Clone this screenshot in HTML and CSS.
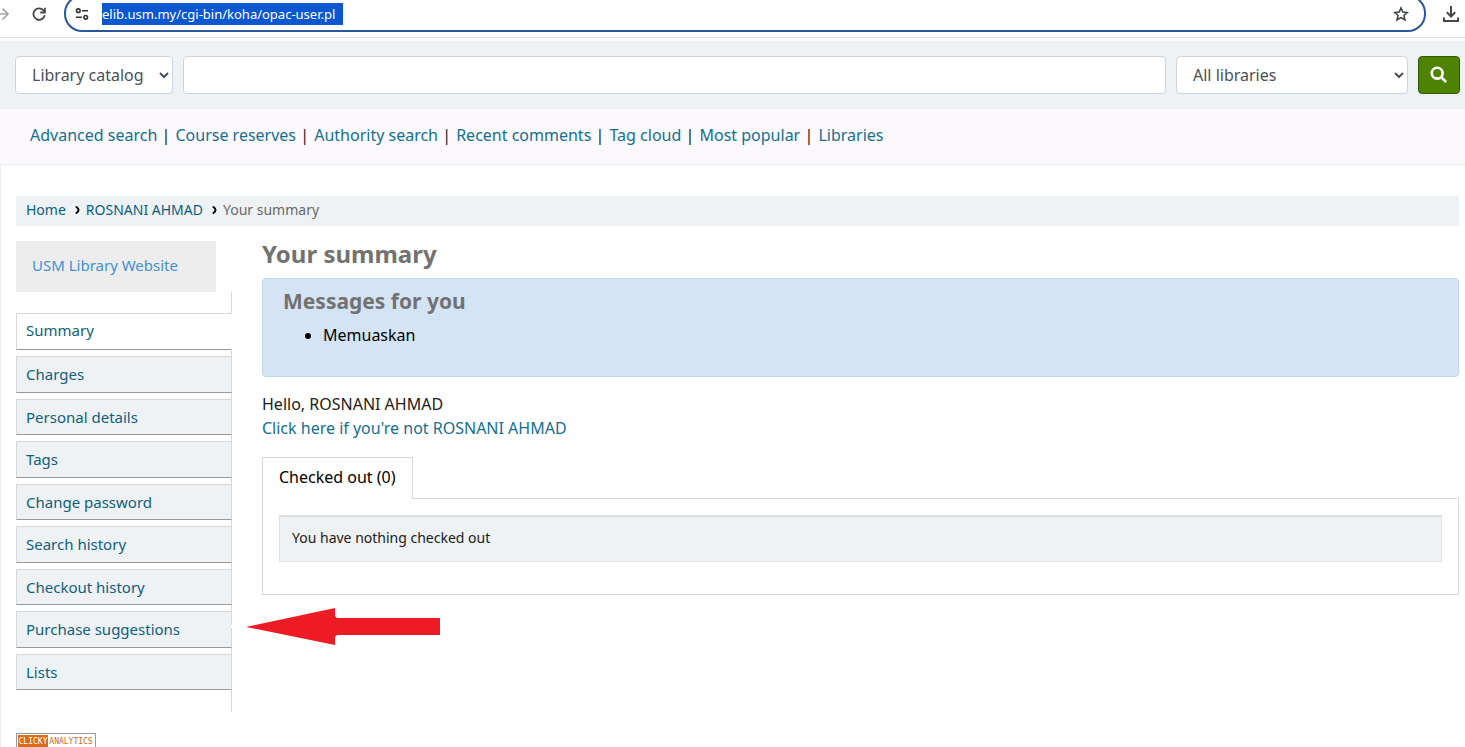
FILE: index.html
```html
<!DOCTYPE html>
<html lang="en">
<head>
<meta charset="utf-8">
<title>Your summary</title>
<link rel="stylesheet" href="styles.css">
</head>
<body>
<div class="browser-bar">
  <button class="tool tool-forward" type="button" aria-label="Forward">
    <svg width="16" height="16" viewBox="0 0 16 16" fill="none" stroke="#a3a3a3" stroke-width="1.7"><path d="M2 8h12M8.500 2.500 14 8l-5.500 5.500"/></svg>
  </button>
  <button class="tool" type="button" aria-label="Reload">
    <svg width="16" height="16" viewBox="0 0 16 16" fill="none" stroke="#474747" stroke-width="1.8"><path d="M13.700 9.200A5.700 5.700 0 1 1 12.300 4.200L13.500 5.600"/><path d="M13.900 1.800v4.700H9.200"/></svg>
  </button>
  <div class="address">
    <svg width="14" height="14" viewBox="0 0 14 14" fill="none" stroke="#333" stroke-width="1.6"><circle cx="3.300" cy="3.700" r="1.800"/><path d="M7 3.700h6M1 10.300h6"/><circle cx="10.700" cy="10.300" r="1.800"/></svg>
    <input class="url" type="text" value="elib.usm.my/cgi-bin/koha/opac-user.pl" aria-label="Address">
    <button class="tool star" type="button" aria-label="Bookmark">
      <svg width="16" height="16" viewBox="0 0 16 16" fill="none" stroke="#3c4043" stroke-width="1.500"><path d="m8 1.900 1.800 4.200 4.600.4-3.500 3 1.100 4.500L8 11.600 4 14l1.100-4.500-3.500-3 4.600-.4z"/></svg>
    </button>
  </div>
  <button class="tool" type="button" aria-label="Downloads">
    <svg width="18" height="18" viewBox="0 0 18 18" fill="none" stroke="#474747" stroke-width="2"><path d="M9 1v10.500M4.800 7.300 9 11.500l4.200-4.200M2 12.500V16h14v-3.500"/></svg>
  </button>
</div>

<form class="search">
  <select class="field field-index" aria-label="Search in"><option>Library catalog</option></select>
  <input class="field field-query" type="text" aria-label="Search terms">
  <select class="field field-branch" aria-label="Library"><option>All libraries</option></select>
  <button class="go" type="submit" aria-label="Search">
    <svg width="18" height="18" viewBox="0 0 18 18" fill="none" stroke="#fff" stroke-width="2.600"><circle cx="7.200" cy="7.200" r="5.400"/><path d="m11.200 11.200 5 5"/></svg>
  </button>
</form>

<nav class="more-searches">
  <a href="#">Advanced search</a> <span>|</span> <a href="#">Course reserves</a> <span>|</span> <a href="#">Authority search</a> <span>|</span> <a href="#">Recent comments</a> <span>|</span> <a href="#">Tag cloud</a> <span>|</span> <a href="#">Most popular</a> <span>|</span> <a href="#">Libraries</a>
</nav>

<div class="page">
  <nav class="breadcrumb" aria-label="Breadcrumb">
    <a href="#">Home</a><svg width="5" height="8" viewBox="0 0 5 8" fill="none" stroke="#000" stroke-width="1.900"><path d="M.8.500C4.500 3 4.500 5 .8 7.500"/></svg><a href="#">ROSNANI AHMAD</a><svg width="5" height="8" viewBox="0 0 5 8" fill="none" stroke="#000" stroke-width="1.900"><path d="M.8.500C4.500 3 4.500 5 .8 7.500"/></svg><span>Your summary</span>
  </nav>
  <div class="columns">
    <aside class="sidebar">
      <a class="website" href="#">USM Library Website</a>
      <ul class="menu">
        <li class="active"><a href="#">Summary</a></li>
        <li><a href="#">Charges</a></li>
        <li><a href="#">Personal details</a></li>
        <li><a href="#">Tags</a></li>
        <li><a href="#">Change password</a></li>
        <li><a href="#">Search history</a></li>
        <li><a href="#">Checkout history</a></li>
        <li class="marked"><a href="#">Purchase suggestions</a>
          <svg class="arrow" width="210" height="38" viewBox="0 0 210 38"><path fill="#fff" d="M0 17h2v3H0z"/><path fill="#ed1c24" d="M15 19 104 0v8l2 2h103v17H106l-2 2v8z"/></svg>
        </li>
        <li><a href="#">Lists</a></li>
      </ul>
      <a class="clicky" href="#"><span class="clicky-name">CLICKY</span><span class="clicky-kind">ANALYTICS</span></a>
    </aside>
    <main class="content">
      <h1>Your summary</h1>
      <section class="messages">
        <h2>Messages for you</h2>
        <ul><li>Memuaskan</li></ul>
      </section>
      <p class="hello">Hello, ROSNANI AHMAD<br><a href="#">Click here if you're not ROSNANI AHMAD</a></p>
      <div class="tabs" role="tablist"><button class="tab" type="button" role="tab" aria-selected="true">Checked out (0)</button></div>
      <div class="panel" role="tabpanel">
        <div class="empty">You have nothing checked out</div>
      </div>
    </main>
  </div>
</div>
</body>
</html>
```
FILE: styles.css
```css
* { box-sizing: border-box; }
body { margin: 0; background: #fbf9fe; color: #202020; font: 16px/24px "Noto Sans", sans-serif; }
a { color: #14708f; text-decoration: none; }
ul { list-style: none; margin: 0; padding: 0; }
svg { display: block; flex: none; }
button { font: inherit; cursor: pointer; }

.browser-bar { display: flex; align-items: flex-end; gap: 16px; height: 38px; padding: 0 5px 5px 0; border-bottom: 1px solid #dcdcdc; background: #fff; overflow: hidden; }
.tool { flex: none; margin: 0 0 10px; padding: 0; border: 0; background: none; }
.tool-forward { margin-left: -6px; margin-right: 5px; }
.browser-bar > .tool:last-child { margin-bottom: 9px; }
.address { flex: 1; display: flex; align-items: center; height: 37px; margin-left: 1px; padding: 0 15px 0 9px; border: 2px solid #2a579b; border-radius: 18px; }
.url { width: 241px; height: 22px; margin: 1px auto 0 13px; padding: 0; border: 0; background: #0b57d0; color: #fff; font: 13px/22px "Noto Sans", sans-serif; }
.star { margin: 0; }

.search { display: flex; gap: 10px; padding: 15px 5px 15px 15px; border-top: 3px solid #fafafa; background: #eef2f5; }
.field { height: 38px; border: 1px solid #ced4da; border-radius: 4px; background: #fff; color: #495057; font: 16px/24px "Noto Sans", sans-serif; }
.field-index, .field-branch { padding: 6px 0 6px 12px; }
.field-index { width: 158px; }
.field-query { flex: 1; min-width: 0; padding: 6px 12px; }
.field-branch { width: 232px; }
.go { display: flex; align-items: center; justify-content: center; width: 42px; height: 38px; padding: 0; border: 1px solid #315900; border-radius: 4px; background: #4f8303; }

.more-searches { padding: 14px 30px 17px; }
.more-searches span { margin: 0 1px 0 0; }
.page { padding: 31px 6px 0 15px; border: solid #eee; border-width: 1px 0 0 1px; background: #fff; }
.breadcrumb { display: flex; align-items: center; gap: 9px; height: 30px; margin-bottom: 15px; padding: 0 10px 2px; background: #eef2f4; font-size: 14px; color: #696969; }
.breadcrumb a { color: #0b607f; }
.breadcrumb svg { margin-right: -3px; }
.columns { display: flex; gap: 30px; }
.sidebar { flex: none; width: 216px; font-size: 15px; line-height: 1.5; }
.website { display: block; width: 200px; padding: 13px 16px 15px; background: #ededed; color: #4290d6; }
.menu { padding: 21px 0 16px; border-right: 1px solid #d8d8d8; }
.menu li { position: relative; margin: 0 -1px 6px 0; border: 1px solid #d8d8d8; border-bottom-color: #999; background: #eef2f4; }
.menu li a { display: block; padding: 6px 9px; color: #0f5f7e; }
.menu .active { border-right-color: #fff; background: #fff; }
.menu .active a { padding: 5px 9px 8px; }
.arrow { position: absolute; left: 214px; top: -4px; z-index: 1; }
.clicky { display: flex; width: 80px; height: 14px; margin-top: 21px; padding: 1px 1px 0; border: 1px solid #999; border-bottom: 0; background: #fff; color: #c96a1b; font: 8px/13px "DejaVu Sans Mono", monospace; }
.clicky-name { width: 30px; background: #dc6d16; color: #fff; text-align: center; }
.clicky-kind { flex: 1; text-align: center; }

.content { flex: 1; min-width: 0; }
h1, h2 { margin: 0; color: #727272; font-weight: 700; }
h1 { margin-bottom: 12px; font-size: 24px; line-height: 25px; }
.messages { padding: 10px 20px; border: 1px solid #c3d6e6; border-radius: 4px; background: #d5e4f4; color: #000; }
h2 { margin-bottom: 9px; font-size: 21px; line-height: 25px; }
.messages ul { padding-left: 40px; margin-bottom: 19px; list-style: disc; }
.hello { margin: 15px 0 17px; }
.tabs { display: flex; }
.tab { position: relative; height: 42px; margin-bottom: -1px; padding: 0 16px 3px; border: 1px solid #d8d8d8; border-bottom: 0; background: #fff; color: #000; }
.panel { padding: 16px 16px 32px; border: 1px solid #d8d8d8; }
.empty { padding: 9px 12px 11px; border: 1px solid #dee2e6; border-top: 2px solid #dddfe0; background: #eef2f4; font-size: 14px; line-height: 24px; }
```
